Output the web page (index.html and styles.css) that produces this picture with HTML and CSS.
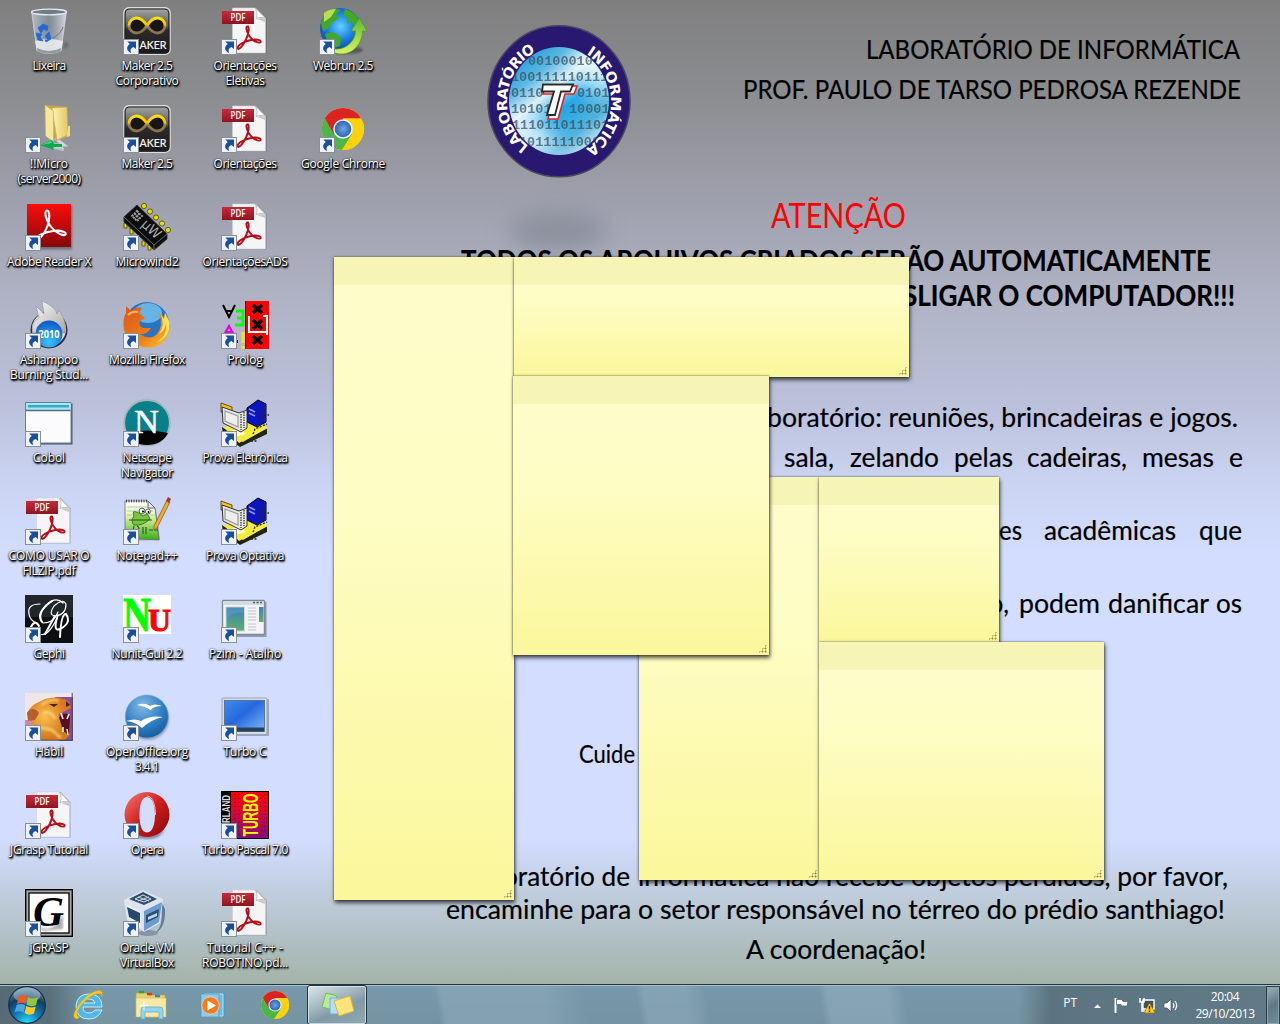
FILE: index.html
```html
<!DOCTYPE html>
<html lang="pt-BR">
<head>
<meta charset="utf-8">
<title>Desktop</title>
<link rel="stylesheet" href="styles.css">
</head>
<body>
<svg class="sprite" aria-hidden="true">
  <defs>
    <linearGradient id="gBin" x1="0" x2="1"><stop offset="0" stop-color="#b9c6d0" stop-opacity=".9"/><stop offset=".5" stop-color="#8796a4" stop-opacity=".5"/><stop offset="1" stop-color="#dfe5ea" stop-opacity=".9"/></linearGradient>
    <linearGradient id="gDark" x1="0" y1="0" x2="0" y2="1"><stop offset="0" stop-color="#a8a8a8"/><stop offset=".4" stop-color="#5c5c5c"/><stop offset=".48" stop-color="#2c2a2a"/><stop offset="1" stop-color="#1a1818"/></linearGradient>
    <linearGradient id="gInf" gradientUnits="userSpaceOnUse" x1="0" y1="10" x2="0" y2="27"><stop offset="0" stop-color="#ffe400"/><stop offset=".45" stop-color="#ffc400"/><stop offset=".6" stop-color="#8f7a50"/><stop offset="1" stop-color="#857350"/></linearGradient>
    <linearGradient id="gRed" x1="0" y1="0" x2="0" y2="1"><stop offset="0" stop-color="#c92a3a"/><stop offset="1" stop-color="#8f1420"/></linearGradient>
    <linearGradient id="gAdobe" x1="0" y1="0" x2="0" y2="1"><stop offset="0" stop-color="#fb0d0a"/><stop offset="1" stop-color="#850808"/></linearGradient>
    <radialGradient id="gGlobe" cx=".5" cy=".45" r=".6"><stop offset="0" stop-color="#66d0ff"/><stop offset=".5" stop-color="#1d86e4"/><stop offset="1" stop-color="#0c3da4"/></radialGradient>
    <linearGradient id="gGreen" x1="0" y1="0" x2="0" y2="1"><stop offset="0" stop-color="#5fb832"/><stop offset=".6" stop-color="#a7de4c"/><stop offset="1" stop-color="#d8f36c"/></linearGradient>
    <linearGradient id="gFold" x1="0" x2="1"><stop offset="0" stop-color="#fff3b8"/><stop offset="1" stop-color="#e3c763"/></linearGradient>
    <radialGradient id="gAsh" cx=".5" cy=".8" r=".8"><stop offset="0" stop-color="#39c3ff"/><stop offset="1" stop-color="#0c57c4"/></radialGradient>
    <linearGradient id="gSilver" x1="0" y1="0" x2="1" y2="1"><stop offset="0" stop-color="#fff"/><stop offset="1" stop-color="#a7a7a7"/></linearGradient>
    <linearGradient id="gFox" x1="0" y1="0" x2="1" y2="1"><stop offset="0" stop-color="#d9571b"/><stop offset=".6" stop-color="#f07c16"/><stop offset="1" stop-color="#ffcb2d"/></linearGradient>
    <linearGradient id="gNote" x1="0" y1="0" x2="0" y2="1"><stop offset="0" stop-color="#fff"/><stop offset=".35" stop-color="#e9f7b0"/><stop offset="1" stop-color="#3cae14"/></linearGradient>
    <linearGradient id="gScreen" x1="0" y1="0" x2="1" y2="1"><stop offset="0" stop-color="#3f8cf0"/><stop offset=".45" stop-color="#2668dc"/><stop offset="1" stop-color="#7db9fb"/></linearGradient>
    <linearGradient id="gPic" x1="0" y1="0" x2="0" y2="1"><stop offset="0" stop-color="#3d7fc0"/><stop offset="1" stop-color="#5fae6c"/></linearGradient>
    <radialGradient id="gOo" cx=".4" cy=".25" r=".8"><stop offset="0" stop-color="#86b9e2"/><stop offset=".6" stop-color="#2f7ec2"/><stop offset="1" stop-color="#14599d"/></radialGradient>
    <linearGradient id="gOpera" x1="0" y1="0" x2="1" y2="1"><stop offset="0" stop-color="#f47a74"/><stop offset=".5" stop-color="#cf1d1a"/><stop offset="1" stop-color="#840808"/></linearGradient>
    <radialGradient id="gHabil" cx=".4" cy=".45" r=".5"><stop offset="0" stop-color="#f8c050"/><stop offset="1" stop-color="#d87a1c"/></radialGradient>
    <radialGradient id="gOrb" cx=".5" cy="1" r="1"><stop offset="0" stop-color="#25e3ff"/><stop offset=".35" stop-color="#1380b8"/><stop offset=".7" stop-color="#123e63"/><stop offset="1" stop-color="#7f9db2"/></radialGradient>
    <radialGradient id="gChr" cx=".5" cy=".5" r=".5"><stop offset="0" stop-color="#6aa6e6"/><stop offset="1" stop-color="#2c66b4"/></radialGradient>
    <linearGradient id="gTurbo" x1="0" y1="0" x2="0" y2="1"><stop offset="0" stop-color="#f00"/><stop offset=".4" stop-color="#e0042c"/><stop offset="1" stop-color="#86087c"/></linearGradient>
    <filter id="soft1" x="-20%" y="-20%" width="140%" height="140%"><feGaussianBlur stdDeviation="1"/></filter>
    <filter id="soft3" x="-50%" y="-100%" width="200%" height="300%"><feGaussianBlur stdDeviation="11"/></filter>
  </defs>
</svg>

<template id="art"><svg>
  <g id="arrow">
    <rect x=".5" y="32.500" width="15" height="15" fill="#eef2f6" stroke="#8a8f94"/>
    <path transform="translate(0 32)" d="M4.200 2.500H13V10L10.600 8C7.600 9.300 6.800 11 8.200 14 4.600 13 1.900 8.600 6.800 5.100Z" fill="#1b4f9c"/>
  </g>

  <g id="pdf">
    <path d="M12.500 1.500H36L45.500 11V46.500H12.500Z" fill="#000" opacity=".25"/>
    <path d="M11.500 1H34.500L44.500 11V46H11.500Z" fill="#f5f5f6" stroke="#cfcfd2" stroke-width=".6"/>
    <path d="M34.500 1C36.500 5 36.500 9 35 11.500 38 10 42 10 44.500 11.300Z" fill="#fff" stroke="#9a9a9e" stroke-width=".6"/>
    <path d="M36 12C39 10.500 42 10.500 44 12V15Z" fill="#c9c9cc"/>
    <rect x="1" y="4" width="32" height="13" fill="url(#gRed)"/>
    <text x="9.500" y="14.200" font-family="Open Sans" font-size="10.500" font-weight="600" fill="#fff" textLength="15" lengthAdjust="spacingAndGlyphs">PDF</text>
    <path d="M27 19.500C24.500 19 25 23.500 28 28.500 30.500 32.500 36 36.500 39 35.500 41.500 34 37 31.500 30 33 22 34.500 16 38.500 16.500 41.500 18 43.500 22.500 38 25 32.500 27.500 27 28.500 21 27 19.500Z" fill="none" stroke="#bc0b1a" stroke-width="1.900"/>
  </g>

  <g id="bin">
    <path d="M38 42Q48 40 40 34Z" fill="#000" opacity=".2" filter="url(#soft1)"/>
    <path d="M6.500 4 12 44Q24 49 36 44L41.500 4Z" fill="url(#gBin)" stroke="#d6dde2" stroke-opacity=".7"/>
    <path d="M10 34Q24 30 38 34L36 43Q24 47.500 12 43Z" fill="#edf0f1" opacity=".85"/>
    <ellipse cx="24" cy="5" rx="17.500" ry="2.800" fill="#727c85" stroke="#e4eaee" stroke-width="1.300"/>
    <path d="M28 31C34 28 37 23 38 20" stroke="#65717b" fill="none"/>
    <path d="M13 21 18 17 23 19 22 24 19 22 16 26ZM11 26 17 27 15 30 18 34 13 33ZM20 29 24 25 26 32 21 35 20 33H23Z" fill="#2468d6" stroke="#2468d6" stroke-width=".8"/>
    <path d="M12 41Q24 47 36 41L35.500 44.500Q24 48.500 12.500 44.500Z" fill="#949b9e"/>
  </g>

  <g id="maker">
    <rect x=".8" y=".6" width="46.400" height="46.800" rx="5" fill="url(#gDark)" stroke="#ddd" stroke-width="1.200"/>
    <rect x="2.200" y="2" width="43.600" height="44" rx="4" fill="none" stroke="#222"/>
    <path d="M24 18.500C20 12.500 17 11 13.500 11A7.500 7.500 0 0 0 13.500 26C17 26 20 24.500 24 18.500 28 12.500 31 11 34.500 11A7.500 7.500 0 0 1 34.500 26C31 26 28 24.500 24 18.500Z" fill="#171515" stroke="url(#gInf)" stroke-width="2.800"/>
    <text x="16.500" y="41.500" font-family="Lato" font-size="10.800" fill="#f4f4f4" stroke="#f4f4f4" stroke-width=".2" textLength="27" lengthAdjust="spacingAndGlyphs">AKER</text>
  </g>

  <g id="webrun">
    <ellipse cx="26" cy="43" rx="18" ry="4" fill="#000" opacity=".35" filter="url(#soft1)"/>
    <circle cx="21.500" cy="21.500" r="20.500" fill="url(#gGlobe)"/>
    <path d="M2 16Q6 4 17 2L22 3 17 7 20 11 13 16 9 22 4 24ZM26 2Q37 5 40 14L37 20 32 15 28 17 29 11 24 9ZM6 27 14 25 22 30 21 39 15 41Q8 36 6 27Z" fill="#42a82b"/>
    <path d="M5 6Q10 2 17 2L12 10 5 15Z" fill="#b4e04e"/>
    <path d="M10 40C20 46 36 38 36.500 24H32L40.500 11 48 24H43.500C43 44 24 52 12 44Z" fill="url(#gGreen)" stroke="#4c9d22" stroke-width=".8"/>
  </g>

  <g id="netfolder">
    <path d="M30 33 39 40H27L38 44" fill="none" stroke="#cfd8da" stroke-width="3"/>
    <path d="M20 0 42 2V32L31 36Z" fill="#c7a94c"/>
    <path d="M27 3 42 2 43 30 32 35Z" fill="url(#gFold)" stroke="#c5a94e" stroke-width=".6"/>
    <path d="M20 0 28.500 6V37L20.500 31Z" fill="#f8e69a" stroke="#cdb25a" stroke-width=".7"/>
    <path d="M43 21H45V31L42 32Z" fill="#f3dc86"/>
    <path d="M15 40 27 35 29 39H37V42H28L29 45Z" fill="#08a84f"/><path d="M16 40 26 36 27 38Z" fill="#35e28c"/>
    <path d="M29 43H39V46L28 44Z" fill="#bac5c8"/>
  </g>

  <g id="chrome">
    <circle cx="24" cy="24" r="21" fill="#fdd20a"/>
    <path d="M24 24 14.500 29.500 5.800 13.500A21 21 0 0 1 42.200 13.500H24Z" fill="#dd2320"/>
    <path d="M24 24 33.100 29.200 23 45A21 21 0 0 1 5.800 13.500L14.900 29.200Z" fill="#4bb648"/>
    <path d="M33.100 29.200 23 45A21 21 0 0 0 42.200 13.500H24L32 19Z" fill="#fdd20a"/>
    <circle cx="24" cy="24" r="9.800" fill="#f3f3f3"/><circle cx="24" cy="24" r="8.300" fill="url(#gChr)"/>
  </g>

  <g id="adobe">
    <rect x="3" y="2.500" width="44" height="44" fill="#000" opacity=".35" filter="url(#soft1)"/>
    <rect x="2" y="1" width="44" height="43" fill="url(#gAdobe)"/>
    <path d="M22 7.500C19 8 20.500 16 25 22.500 29 28 36 33 40 32 43 30 37 26.500 28 28 20 29 10 33.500 11 36.500 14 38 20 30 22.500 23 25 16 25 8 22 7.500Z" fill="none" stroke="#fff" stroke-width="2.100"/>
  </g>

  <g id="chip">
    <g fill="#e6dc00" stroke="#4b4700" stroke-width=".8"><circle cx="21" cy="3" r="2.600"/><circle cx="27" cy="8.500" r="2.600"/><circle cx="33" cy="14.500" r="2.600"/><circle cx="39" cy="20.500" r="2.600"/><circle cx="45" cy="27" r="2.600"/><path d="M1 20H4V25H1ZM7 25H10V31H7ZM19 38H22V43H19ZM25 42H28V47H25Z"/></g>
    <path d="M1 14 14 2 44 31V36L31 47 27 43 1 19Z" fill="#0d0d0d" stroke="#333"/>
    <path d="M1 14 31 42V47M31 42 44 31" stroke="#666" fill="none"/>
    <path d="M14 8 19 13 14 18 9 13ZM11.500 10.500 16.500 15.500M16.500 10.500 11.500 15.500" fill="none" stroke="#999" stroke-width="2" stroke-dasharray="2 1"/>
    <text x="17.500" y="22.500" transform="rotate(42 17.500 22.500)" font-family="DejaVu Sans" font-size="14" fill="#aaa" textLength="21" lengthAdjust="spacingAndGlyphs">μW</text>
  </g>

  <g id="ashampoo">
    <circle cx="24" cy="29" r="18.500" fill="#2d3138"/><circle cx="24" cy="28" r="17" fill="#e9e9eb"/>
    <path d="M8 32Q5 21 14 17L11 5 19 13 17 0Q31 6 32 13L34 9Q42 20 40 32Z" fill="url(#gSilver)" stroke="#8f8f93" stroke-width=".6"/>
    <circle cx="24" cy="33" r="13.500" fill="url(#gAsh)"/>
    <text x="13.500" y="36.500" font-family="Open Sans" font-size="11" font-weight="700" fill="#fff" textLength="21" lengthAdjust="spacingAndGlyphs">2010</text>
  </g>

  <g id="firefox">
    <circle cx="24" cy="23" r="22" fill="#2a73c4"/><ellipse cx="25" cy="12" rx="14" ry="10" fill="#7cc8ee" opacity=".75"/>
    <path d="M3 5 8 10Q13 5 19 7L16 12 22 17 17 20Q15 24 20 27L28 27Q24 34 17 33 27 40 34 33 41 25 36 12 40 14 41 18L42 12Q50 25 44 36 36 49 20 46 5 43 1 29-1 18 3 12Z" fill="url(#gFox)"/>
    <path d="M37 12Q43 24 36 33 42 30 43 22 45 34 34 41 48 37 46 20L42 12 41 18Z" fill="#ffe25a"/>
    <path d="M5 14Q9 10 15 11" stroke="#ffb061" fill="none" stroke-width="2"/>
  </g>

  <g id="prolog">
    <rect x="25" width="23" height="48" fill="#f00"/><path d="M24.500 0V48" stroke="#800"/>
    <path d="M2 4 8 16 14 4M5 10H11" stroke="#000" stroke-width="2" fill="none"/>
    <path d="M15 10H22V24H14M16 17H22" stroke="#0f1" stroke-width="2.800" fill="none"/>
    <path d="M3 34 8 25 13 34M4 31H11" stroke="#e400e4" stroke-width="2.200" fill="none"/>
    <path d="M22 31V42M22 45V48" stroke="#ee0" stroke-width="3"/><rect x="15" y="39" width="2" height="3"/>
    <path d="M32 4 41 12M41 4 32 12M32 19 41 28M41 19 32 28M32 35 41 43M41 35 32 43" stroke="#000" stroke-width="3.400"/>
    <path d="M28 15V31H46M42 15H46V34" stroke="#fff" stroke-width="2" fill="none"/>
  </g>

  <g id="cobol">
    <path d="M1.500 4.500H47.500V45.500H1.500Z" fill="#4b5866"/><path d="M.5 3.500H46V44H.5Z" fill="#fbfbfd" stroke="#6d7f92"/>
    <path d="M1 4H45.500V11H1Z" fill="#9eeaf3"/><path d="M3 6H44V8.500H3Z" fill="#3ca8c6"/><path d="M1 11.500H45.500" stroke="#586d84" stroke-width="1.600"/>
  </g>

  <g id="netscape">
    <circle cx="24" cy="23.800" r="22.800" fill="#06808a" stroke="#a4b4b8" stroke-width="1.800"/>
    <path d="M3 34Q24 29 45 34 39 46 24 46 9 46 3 34Z" fill="#050505"/>
    <text x="11" y="33.500" font-family="Liberation Serif" font-size="33" fill="#fff" stroke="#fff" stroke-width=".5" textLength="25" lengthAdjust="spacingAndGlyphs">N</text>
  </g>

  <g id="prova">
    <path d="M1 28 22 43 46 29V35L19 48 2 36Z" fill="#242400"/><path d="M3 28 30 20 47 29 18 44Z" fill="#f5ec38"/>
    <path d="M8 33 17 29 25 35 14 38Z" fill="#fffdd0"/>
    <path d="M26 9 37 1 45 5V23L36 28 26 23Z" fill="#0a15c8" stroke="#000"/><path d="M36 9 45 5V23L36 28Z" fill="#1018a0"/><path d="M28 10 34 13M28 14 34 17" stroke="#8f98e8" stroke-width="1.600"/>
    <path d="M0 4 11 8V13L0 13Z" fill="#f5c018" stroke="#443600" stroke-width=".8"/>
    <path d="M1 8 18 14 26 11V29L20 33 2 24Z" fill="#e7e7e3" stroke="#333"/><path d="M4 12 17 17V28L4 22Z" fill="#eee" stroke="#9b9b9b" stroke-width="1.200"/><path d="M20 15V31M23 13V29" stroke="#333" stroke-width="1.300" stroke-dasharray="1.500 1"/>
    <path d="M32 35 34 30 46 25M43 16H48M30 42H37" stroke="#222" stroke-dasharray="2 1.500" stroke-width="1.300" fill="none"/>
  </g>

  <g id="notepad">
    <path d="M3 5H26L33 12 37 43 3 44Z" fill="#000" opacity=".25"/>
    <path d="M2 4H25L32 11 36 43 2 41Z" fill="url(#gNote)" stroke="#62706c" stroke-width=".8"/>
    <path d="M4 10H24M4 14H30M4 18H32" stroke="#9dbfce" stroke-width=".8"/>
    <path d="M3 4H25" stroke="#555" stroke-width="3" stroke-dasharray="1 1.500"/><path d="M25 4V11H32Z" fill="#e3e9e9" stroke="#667"/>
    <path d="M11 19Q8 12 16 16L20 19Q25 15 27 22 20 29 11 28 7 24 11 19Z" fill="#78c43d" stroke="#2d5412" stroke-width=".7"/>
    <circle cx="19" cy="14" r="2.900" fill="#fff" stroke="#222" stroke-width=".7"/><circle cx="25" cy="14.500" r="2.500" fill="#fff" stroke="#222" stroke-width=".7"/><circle cx="20" cy="14.500" r="1"/><circle cx="25.500" cy="15" r=".9"/>
    <path d="M6 23 29 23M11 29Q9 36 14 34 18 31 14 29M20 30V37M23 30V37M26 33H30M31 33H35" stroke="#252" stroke-width="1.100" fill="none"/>
    <path d="M44 3 47 5 34 31 31 33 31 29Z" fill="#efab31" stroke="#7d5119" stroke-width=".7"/><path d="M45 0 48 2 46 6 43 4Z" fill="#a33"/>
  </g>

  <g id="gephi">
    <rect width="48" height="48" fill="#0c0f12"/><path d="M0 0H48V22H0Z" fill="#20262a"/>
    <g fill="none" stroke="#fff" stroke-linecap="round"><path d="M15 9Q2 9 4 19 5 26 12 28M38 8Q31 1 21 10 12 21 18 28 29 28 33 17M41 9Q38 3 29 11 23 20 30 21 41 20 41 9M33 21Q23 43 15 39" stroke-width="1.200"/><path d="M27 6Q10 18 17 27M30 21 20 39M32 23Q28 37 35 34 47 28 41 19 36 19 35 42M6 32Q10 24 14 31" stroke-width="2"/></g>
  </g>

  <g id="nunit">
    <rect width="48" height="39" fill="#fff"/>
    <text x="0" y="36" font-family="Liberation Serif" font-weight="700" font-size="49" fill="#0f0" stroke="#0f0" textLength="28" lengthAdjust="spacingAndGlyphs">N</text>
    <text x="25" y="36" font-family="Liberation Serif" font-weight="700" font-size="31" fill="#f00" stroke="#f00" textLength="23" lengthAdjust="spacingAndGlyphs">U</text>
  </g>

  <g id="pzim">
    <path d="M3 7H45.500V42H3Z" fill="#000" opacity=".3"/><rect x="1.500" y="5.500" width="42" height="34" rx="1" fill="#f1f3f4" stroke="#7d8993" stroke-width="1.400"/>
    <path d="M2 6.500H43V10H2Z" fill="#d2dbe2"/><path d="M32 7.500H42" stroke="#455d76" stroke-width="1.500" stroke-dasharray="2 1.500"/>
    <rect x="5" y="12" width="18.500" height="24" fill="url(#gPic)" stroke="#d3d7d8"/><path d="M5 24Q12 16 23 18V12H5Z" fill="#6bacc4" opacity=".35"/>
    <path d="M27 13H35M27 16H35M27 19H35M27 22H35M27 25H35M27 29H35M27 32H35M27 35H35" stroke="#c2c7ca"/><rect x="38" y="12" width="4.500" height="15" fill="url(#gPic)"/>
  </g>

  <g id="habil">
    <rect width="48" height="48" fill="#f1e6e6"/><path d="M30 4H48V48H34Z" fill="#8b5197"/><path d="M0 27H12V48H0Z" fill="#c58ab0"/>
    <path d="M2 20Q6 12 14 9L20 6Q32 2 43 8L46 15 40 18 34 21 37 31 45 41 40 47H8Q11 33 5 28Z" fill="url(#gHabil)"/>
    <path d="M2 20Q8 12 14 20L10 27 3 28Z" fill="#b4602a"/><path d="M34 24Q42 17 45 24L44 42 38 38Z" fill="#56101c"/><path d="M36 20 38 26M44 21 42 26M38 39 38 34M43 42 42 36" stroke="#fff6d8" stroke-width="1.500"/>
    <path d="M24 11 33 11 29 14ZM41 8 45 12 41 14Z" fill="#54200e"/><path d="M16 12Q26 5 34 8M14 34 27 37 36 45M18 20Q27 17 30 26" stroke="#ffe58b" stroke-width="2.500" fill="none" opacity=".7" filter="url(#soft1)"/><path d="M47.200 0V47.200H16" stroke="#444" fill="none"/>
  </g>

  <g id="ooo">
    <ellipse cx="25" cy="26" rx="21" ry="21" fill="#333" opacity=".35" filter="url(#soft1)"/>
    <circle cx="23.800" cy="23.500" r="21.500" fill="url(#gOo)" stroke="#6ba3d0" stroke-width=".6"/>
    <path d="M14 12Q22 9 27 13 32 10 39 13 31 13 27.500 17 22 13 14 12ZM3 28Q12 25 18 28 27 22 40 24 27 27 19 35 13 29 3 28Z" fill="#fff"/>
  </g>

  <g id="turboc">
    <rect x="2" y="6" width="46" height="37" rx="1" fill="#000" opacity=".25"/><rect x="1" y="5" width="45" height="36.500" rx="1" fill="#d3dde5" stroke="#9aa6b0"/>
    <rect x="3.500" y="7.500" width="40" height="31" fill="url(#gScreen)" stroke="#4b6590" stroke-width=".8"/><path d="M4 34.500H43V38.500H4Z" fill="#2a3f58"/><path d="M4 34.500H10V38H4Z" fill="#3fa44b"/>
  </g>

  <g id="opera">
    <path d="M6 38Q24 52 42 38 38 48 24 48 10 48 6 38Z" fill="#000" opacity=".4" filter="url(#soft1)"/>
    <path fill-rule="evenodd" d="M24 1A22 22 0 0 1 24 46 22 22 0 0 1 24 1ZM24 6C18 6 16.500 16 16.500 24S18 41.500 24 41.500 32 32 32 24 30 6 24 6Z" fill="url(#gOpera)"/>
    <path d="M24 5C30 5 32.500 15 32.500 24" stroke="#ffb3ae" fill="none"/>
  </g>

  <g id="turbo">
    <rect width="48" height="48" fill="#000"/><rect x="10" y="1" width="37" height="46" fill="url(#gTurbo)"/>
    <path d="M14 3V47M18 3V47M40 3V47M44 3V47" stroke="#42106f" stroke-width="1" stroke-dasharray="1 3" opacity=".8"/>
    <text transform="translate(8.500 44) rotate(-90)" font-family="Liberation Sans" font-weight="700" font-size="10.500" fill="#ddd" textLength="40" lengthAdjust="spacingAndGlyphs">BORLAND</text>
    <text transform="translate(37 45.500) rotate(-90)" font-family="Liberation Sans" font-weight="700" font-size="22" fill="#ff0" textLength="43" lengthAdjust="spacingAndGlyphs">TURBO</text>
  </g>

  <g id="jgrasp">
    <rect x=".7" y=".7" width="46.600" height="46.600" fill="#a9a9a9" stroke="#000" stroke-width="1.400"/><rect x="4" y="4" width="40" height="40" fill="#fff" stroke="#000" stroke-width="1.300"/>
    <path d="M14 38Q22 42 30 37L38 26 38 40 18 42Z" fill="#777" opacity=".6" filter="url(#soft1)"/>
    <text x="8" y="37" font-family="Liberation Serif" font-weight="700" font-style="italic" font-size="43" fill="#000" textLength="31" lengthAdjust="spacingAndGlyphs">G</text>
  </g>

  <g id="vbox">
    <path d="M28 45Q42 43 38 12L42 20Q43 42 28 46Z" fill="#34496e" opacity=".6"/><ellipse cx="25" cy="44" rx="10" ry="3" fill="#8493ab"/>
    <path d="M1 11 20 1 40 10 37 34 21 43 4 31Z" fill="#dbe4ef"/>
    <path d="M6 10 20 3 34 10 21 16Z" fill="#304e6b"/><path d="M12 10 20 6 28 10 21 13ZM15 8 26 12M26 8 15 12" stroke="#d4dde7" fill="none"/>
    <path d="M3 15 18 22V39L6 30Z" fill="#e7edf5"/><path d="M4 18 17 24V34L6 28Z" fill="#274a6c"/>
    <path d="M21 22 39 13 36 33 21 42Z" fill="#6e9bd0"/><path d="M23 26 36 20 35 28 23 34Z" fill="#2c4e73"/><path d="M25 28 34 24V27L25 31Z" fill="#c5d5e5"/>
  </g>
</svg></template>

<main class="desktop">
  <svg class="wallpaper" viewBox="0 0 1280 1024">
    <defs>
      <linearGradient id="wall" x1="0" y1="0" x2="0" y2="1">
        <stop offset="0" stop-color="#7f7f7f"/><stop offset=".1" stop-color="#8d8e92"/><stop offset=".2" stop-color="#9fa1ae"/><stop offset=".3" stop-color="#b1b4c6"/><stop offset=".4" stop-color="#bcc2dc"/><stop offset=".47" stop-color="#cad3f1"/><stop offset=".54" stop-color="#d2ddff"/><stop offset=".82" stop-color="#d2ddff"/><stop offset=".87" stop-color="#c1cedf"/><stop offset=".92" stop-color="#afbfc2"/><stop offset=".96" stop-color="#a4b4a9"/><stop offset="1" stop-color="#a4b4a9"/>
      </linearGradient>
      <linearGradient id="shine" x1="0" y1="0" x2=".8" y2="1"><stop offset=".1" stop-color="#1b9ada"/><stop offset=".3" stop-color="#5ab8e2"/><stop offset=".45" stop-color="#d8f0fa"/><stop offset=".6" stop-color="#1ea6e6"/><stop offset=".8" stop-color="#53b3dc"/><stop offset="1" stop-color="#fff"/></linearGradient>
      <clipPath id="disc"><ellipse cx="559" cy="101" rx="50" ry="54"/></clipPath>
    </defs>
    <rect width="1280" height="1024" fill="url(#wall)"/>
    <ellipse cx="558" cy="231" rx="50" ry="19" fill="#7e828e" opacity=".6" filter="url(#soft3)"/>

    <ellipse cx="559" cy="101.300" rx="71" ry="75.500" fill="#28186f" stroke="#4b4560" stroke-width="1.500"/>
    <g clip-path="url(#disc)">
      <rect x="505" y="45" width="110" height="112" fill="url(#shine)"/>
      <path d="M590 45 620 55 620 90 590 95 575 60ZM505 120 540 115 560 157H505Z" fill="#fff" opacity=".85" filter="url(#soft3)"/>
      <g class="binary">
        <text x="528" y="65">00100010</text><text x="511" y="81">1001111101110</text><text x="511" y="97">0110</text><text x="577" y="97">0101</text><text x="511" y="113">10101</text><text x="569" y="113">10001</text><text x="512" y="129">111011011101</text><text x="519" y="146">10111110001</text>
      </g>
    </g>
    <g transform="translate(559 101.300) scale(1 1.065)">
      <path id="ringL" d="M-30.500 42A52 52 0 0 1-28-43.800" fill="none"/>
      <path id="ringR" d="M27.500-44.200A52 52 0 0 1 30.500 42" fill="none"/>
      <text class="ring"><textPath href="#ringL" textLength="106">LABORATÓRIO</textPath></text>
      <text class="ring"><textPath href="#ringR" textLength="106">INFORMÁTICA</textPath></text>
    </g>
    <path d="M545 86H577L574 94H565L558 119H548L554 94H543Z" fill="#fff" stroke="#e22420" stroke-width="1.600"/>
    <path d="M543 84.500H573L570 91.500H561L555 115H547L554 91.500H542Z" fill="#fff" stroke="#2a2a2a" stroke-width="1.800"/>

    <g class="wall-text">
      <text x="866" y="59" textLength="374">LABORATÓRIO DE INFORMÁTICA</text>
      <text x="743" y="99" textLength="498">PROF. PAULO DE TARSO PEDROSA REZENDE</text>
      <text class="alert" x="771" y="228" textLength="135">ATENÇÃO</text>
      <text class="strong" x="461" y="271" textLength="750">TODOS OS ARQUIVOS CRIADOS SERÃO AUTOMATICAMENTE</text>
      <text class="strong" x="903" y="306" textLength="332">SLIGAR O COMPUTADOR!!!</text>
      <text x="767" y="427" textLength="471">boratório: reuniões, brincadeiras e jogos.</text>
      <text x="757" y="467" textLength="13">a</text>
      <text x="784" y="467" textLength="50">sala,</text><text x="850" y="467" textLength="89">zelando</text><text x="954" y="467" textLength="59">pelas</text><text x="1027" y="467" textLength="100">cadeiras,</text><text x="1142" y="467" textLength="72">mesas</text><text x="1229" y="467" textLength="14">e</text>
      <text x="999" y="540" textLength="23">es</text><text x="1044" y="540" textLength="132">acadêmicas</text><text x="1199" y="540" textLength="43">que</text>
      <text x="989" y="613" textLength="20">o,</text><text x="1019" y="613" textLength="81">podem</text><text x="1108" y="613" textLength="101">danificar</text><text x="1216" y="613" textLength="26">os</text>
      <text class="small" x="579" y="763" textLength="56">Cuide</text>
      <text x="503" y="886" textLength="127">oratório de</text><text x="638" y="886" textLength="590">informática não recebe objetos perdidos, por favor,</text>
      <text x="446" y="919" textLength="779">encaminhe para o setor responsável no térreo do prédio santhiago!</text>
      <text x="746" y="959" textLength="180">A coordenação!</text>
    </g>
  </svg>

  <ul class="icons" id="icons"></ul>

  <div class="note note-a"><i class="grip"></i></div>
  <div class="note note-d"><i class="grip"></i></div>
  <div class="note note-e"><i class="grip"></i></div>
  <div class="note note-f"><i class="grip"></i></div>
  <div class="note note-b"><i class="grip"></i></div>
  <div class="note note-c"><i class="grip"></i></div>
</main>

<footer class="taskbar">
  <div class="start"><svg width="40" height="40" viewBox="0 0 40 40">
    <circle cx="20" cy="20" r="18.300" fill="url(#gOrb)" stroke="#173043" stroke-width="1.200"/>
    <ellipse cx="20" cy="10" rx="13.500" ry="7.500" fill="#c5dbe8" opacity=".42"/>
    <path d="M11.500 11.500Q16 8.500 20 11.500L18.500 19Q14 16.500 10 19Z" fill="#ef5a23"/><path d="M21 12Q26 15 31 12L29 20Q25 22.500 19.500 19.500Z" fill="#92c83e"/><path d="M9.700 20Q14 18 18.300 20.500L16.500 27.500Q12 25 7.500 27.500Z" fill="#4ea4e2"/><path d="M19.300 21Q24 23.500 28.700 21.500L27 28.500Q22 31 17.500 28Z" fill="#fbc928"/>
  </svg></div>
  <div class="task"><svg width="34" height="34" viewBox="0 0 34 34"><path d="M30 19H11Q11 25 17 25 21 25 23 22H30Q26 31 17 31 4 31 4 18 5 6 17 6 30 6 30 19ZM12 15H23Q22 11 17.500 11 12.500 11 12 15Z" fill="#4db9ec" stroke="#c6edfb" stroke-width="1"/><path d="M5 31Q-2 30 6 18 14 6 24 3 32 1 30 9 30 4 24 6 15 9 8 19 2 28 8 29Z" fill="#f7c924" stroke="#d99b10" stroke-width=".5"/></svg></div>
  <div class="task"><svg width="34" height="34" viewBox="0 0 34 34"><path d="M2 5H12L14 7H31V29H2Z" fill="#ebcf71" stroke="#b89741" stroke-width=".6"/><path d="M5 4H10" stroke="#19b32a" stroke-width="2.500"/><path d="M13 6H18" stroke="#d93b22" stroke-width="2.500"/><path d="M21 8H26" stroke="#218dd9" stroke-width="2.500"/><path d="M2 10H32V29H2Z" fill="#f8e9a4" stroke="#d2b85e" stroke-width=".6"/><path d="M7 31V22Q7 19 10 19H26Q29 19 29 22V31H25V24H11V31Z" fill="#93d4f2" stroke="#5ba9cf" stroke-width=".7"/><path d="M10 13V22M5.500 17.500H14.500" stroke="#fff" stroke-width=".9"/></svg></div>
  <div class="task"><svg width="34" height="34" viewBox="0 0 34 34"><path d="M12 5H30V29H12Z" fill="#4f9dc7"/><path d="M9 6H27V28H9Z" fill="#77bce0" stroke="#b7e0f3"/><path d="M5 6H23V29H5Z" fill="#8ecaec" stroke="#499dc6" stroke-width=".7"/><circle cx="14.500" cy="17.500" r="8.700" fill="#f47c20" stroke="#ffd4ad" stroke-width=".7"/><path d="M11.500 12.500V22.500L20 17.500Z" fill="#fff"/></svg></div>
  <div class="task"><svg width="32" height="32" viewBox="0 0 48 48" data-art="chrome"></svg></div>
  <div class="task active"><svg width="34" height="30" viewBox="0 0 34 30"><path d="M6 3 17 6 13 20 2 17Z" fill="#b9e99c" stroke="#6fbf57"/><path d="M10 8H23V24H10Z" fill="#b4dcf8" stroke="#72aedb"/><path d="M14 11 30 6 34 21 19 26Z" fill="#fae57c" stroke="#dbb73a"/></svg></div>
  <div class="tray">
    <span class="lang">PT</span>
    <svg width="9" height="5" viewBox="0 0 9 5" class="up"><path d="M4.500.5 8 4H1Z" fill="#fff"/></svg>
    <svg width="17" height="17" viewBox="0 0 17 17" class="flag"><path d="M2.500 1V16" stroke="#fff" stroke-width="2"/><path d="M3.500 2.500H9L10 4.500H15L14 9H9L8 7.500H3.500Z" fill="#fff" stroke="#405058" stroke-width=".6"/></svg>
    <svg width="18" height="18" viewBox="0 0 18 18" class="net"><path d="M5 4H16V13H5Z" fill="#40535d" stroke="#fff" stroke-width="1.400"/><path d="M2 2V6H6V2M4 6V15H8" stroke="#fff" stroke-width="1.500" fill="none"/><path d="M11.500 7 17 17H6Z" fill="#ffd21e" stroke="#9a7400" stroke-width=".7"/><path d="M11.500 10V13.500M11.500 14.500V16" stroke="#222" stroke-width="1.400"/></svg>
    <svg width="17" height="17" viewBox="0 0 17 17" class="vol"><path d="M1 6H4L8 2V15L4 11H1Z" fill="#fff" stroke="#3c5059" stroke-width=".7"/><path d="M10 6Q12 8.500 10 11M12 4Q15.500 8.500 12 13" stroke="#e8f1f4" fill="none" stroke-width="1.200"/></svg>
    <div class="clock"><span>20:04</span><span>29/10/2013</span></div>
    <div class="peek"></div>
  </div>
</footer>
<script src="icons.js"></script>
</body>
</html>
```

FILE: styles.css
```css
* { box-sizing: border-box; }
body {
  margin: 0;
  width: 1280px;
  height: 1024px;
  overflow: hidden;
  display: flex;
  flex-direction: column;
  background: #a4b4a9;
  font-family: "Open Sans", "Noto Sans", sans-serif;
}
.sprite { position: absolute; width: 0; height: 0; }
.desktop { position: relative; flex: 0 0 984px; overflow: hidden; }
.wallpaper { position: absolute; left: 0; top: 0; width: 1280px; height: 1024px; }
.wall-text text { font-family: Lato, sans-serif; font-size: 27.5px; fill: #000; stroke: #000; stroke-width: .2px; }
.wall-text .alert { font-size: 34px; fill: #f00; stroke: none; }
.wall-text .strong { font-size: 28px; font-weight: 700; }
.wall-text .small { font-size: 25.5px; }
.binary text { font-family: "Liberation Mono", monospace; font-weight: 700; font-size: 13.5px; fill: #36515c; opacity: .72; }
.ring { font-family: "DejaVu Sans", sans-serif; font-weight: 700; font-size: 14px; fill: #fff; }

.icons {
  position: relative;
  margin: 0;
  padding: 0;
  list-style: none;
  display: grid;
  grid-template-rows: repeat(10, 98px);
  grid-auto-columns: 98px;
  grid-auto-flow: column;
  width: max-content;
}
.icon { display: flex; flex-direction: column; align-items: center; padding-top: 7px; }
.glyph { display: block; width: 48px; height: 48px; overflow: visible; }
.label {
  margin-top: 3px;
  color: #fff;
  font-size: 12px;
  line-height: 15px;
  text-align: center;
  white-space: nowrap;
  text-shadow: 0 1px 2px #000, 1px 1px 1px #000, 1px 2px 2px #000, 0 0 2px rgba(0, 0, 0, .7);
}
.label span { display: block; width: max-content; margin: 0 auto; }

.note {
  position: absolute;
  background: linear-gradient(#f7f5b5 0 28px, transparent 28px), linear-gradient(#fefdca 28px, #fefdc6 35%, #fbf79c);
  box-shadow: 1px 3px 4px rgba(0, 0, 0, .65), 0 0 2px rgba(0, 0, 0, .6);
}
.note-a { left: 334px; top: 257px; width: 180px; height: 643px; }
.note-b { left: 514px; top: 257px; width: 395px; height: 120px; }
.note-c { left: 513px; top: 376px; width: 256px; height: 279px; }
.note-d { left: 639px; top: 477px; width: 180px; height: 403px; }
.note-e { left: 819px; top: 477px; width: 180px; height: 165px; }
.note-f { left: 819px; top: 642px; width: 285px; height: 238px; }
.grip {
  position: absolute;
  right: 2px;
  bottom: 2px;
  width: 9px;
  height: 9px;
  background: radial-gradient(circle, #8f8b4c 0 .8px, transparent 1.2px) 0 0 / 3px 3px;
  clip-path: polygon(100% 0, 100% 100%, 0 100%);
}

.taskbar {
  flex: 0 0 40px;
  display: flex;
  align-items: stretch;
  border-top: 1px solid #24353e;
  box-shadow: inset 0 1px 0 #a9c1cc;
  background:
    linear-gradient(90deg, #566b76 0, #5a707b 50px, rgba(90, 112, 123, 0) 92px),
    linear-gradient(90deg, transparent 1018px, #5c7480 1050px, #607a88 1262px, #67818e),
    linear-gradient(80deg, transparent 434px, rgba(160, 188, 203, .3) 440px 540px, transparent 580px 632px, rgba(160, 188, 203, .3) 640px 680px, transparent 700px 812px, rgba(160, 188, 203, .35) 820px 880px, transparent 895px),
    linear-gradient(rgba(120, 155, 180, .45), rgba(110, 145, 150, .3)),
    #7896a5;
}
.start { width: 58px; padding-left: 7px; }
.start svg { display: block; }
.task { width: 62px; display: flex; align-items: center; justify-content: center; }
.task svg { display: block; }
.task.active {
  width: 60px;
  margin-left: 1px;
  border: 1px solid #26353e;
  border-radius: 3px;
  box-shadow: inset 0 0 0 1px rgba(235, 245, 250, .65);
  background: linear-gradient(155deg, #dce5e9 0, #a3b6bf 40%, #829aa6 60%, #92a9b4);
}
.tray { margin-left: auto; display: flex; align-items: center; color: #fff; font-size: 12px; }
.lang { margin-right: 16px; font-size: 12px; transform: translateY(-3px); }
.up { margin-right: 11px; margin-top: 2px; }
.flag { margin-right: 8px; }
.net { margin-right: 7px; }
.vol { margin-right: 15px; }
.clock { width: 60px; display: flex; flex-direction: column; align-items: center; line-height: 17px; letter-spacing: -.45px; }
.peek {
  align-self: stretch;
  width: 14px;
  margin: 1px 0 0 11px;
  border: 1px solid #2b3d47;
  box-shadow: inset 0 0 0 1px #8ca4af;
  background: linear-gradient(150deg, #9db0b9, #5f7884 50%, #71909e);
}
```

FILE: icons.js
```js
// One entry per desktop icon, column by column: artwork, label lines with widths, shortcut flag.
const items = [
  ["bin", [["Lixeira", 33]], false],
  ["netfolder", [["!!Micro", 38], ["(server2000)", 63]]],
  ["adobe", [["Adobe Reader X", 84]]],
  ["ashampoo", [["Ashampoo", 58], ["Burning Stud...", 78]]],
  ["cobol", [["Cobol", 32]]],
  ["pdf", [["COMO USAR O", 81], ["FILZIP.pdf", 53]]],
  ["gephi", [["Gephi", 31]]],
  ["habil", [["Hábil", 28]]],
  ["pdf", [["JGrasp Tutorial", 78]]],
  ["jgrasp", [["jGRASP", 39]]],
  ["maker", [["Maker 2.5", 51], ["Corporativo", 63]]],
  ["maker", [["Maker 2.5", 51]]],
  ["chip", [["Microwind2", 63]]],
  ["firefox", [["Mozilla Firefox", 76]]],
  ["netscape", [["Netscape", 49], ["Navigator", 52]]],
  ["notepad", [["Notepad++", 61]]],
  ["nunit", [["Nunit-Gui 2.2", 71]]],
  ["ooo", [["OpenOffice.org", 82], ["3.4.1", 24]]],
  ["opera", [["Opera", 32]]],
  ["vbox", [["Oracle VM", 54], ["VirtualBox", 54]]],
  ["pdf", [["Orientações", 63], ["Eletivas", 39]]],
  ["pdf", [["Orientações", 63]]],
  ["pdf", [["OrientaçõesADS", 85]]],
  ["prolog", [["Prolog", 35]]],
  ["prova", [["Prova Eletrônica", 85]]],
  ["prova", [["Prova Optativa", 78]]],
  ["pzim", [["Pzim - Atalho", 72]]],
  ["turboc", [["Turbo C", 43]]],
  ["turbo", [["Turbo Pascal 7.0", 86]]],
  ["pdf", [["Tutorial C++ -", 76], ["ROBOTINO.pd...", 86]]],
  ["webrun", [["Webrun 2.5", 60]]],
  ["chrome", [["Google Chrome", 84]]]
];

const art = document.getElementById("art").content;
const draw = name => art.getElementById(name).innerHTML;

const list = document.getElementById("icons");
for (const [name, lines, shortcut = true] of items) {
  const li = document.createElement("li");
  li.className = "icon";
  li.innerHTML =
    `<svg class="glyph" viewBox="0 0 48 48">${draw(name)}${shortcut ? draw("arrow") : ""}</svg>` +
    `<div class="label">${lines.map(([text]) => `<span>${text}</span>`).join("")}</div>`;
  list.append(li);
  li.querySelectorAll("span").forEach((span, i) => {
    const spare = lines[i][1] - span.getBoundingClientRect().width;
    span.style.letterSpacing = `${spare / lines[i][0].length}px`;
  });
}

document.querySelectorAll("[data-art]").forEach(svg => { svg.innerHTML = draw(svg.dataset.art); });
document.querySelectorAll(".wall-text text").forEach(t => t.setAttribute("lengthAdjust", "spacingAndGlyphs"));
```
